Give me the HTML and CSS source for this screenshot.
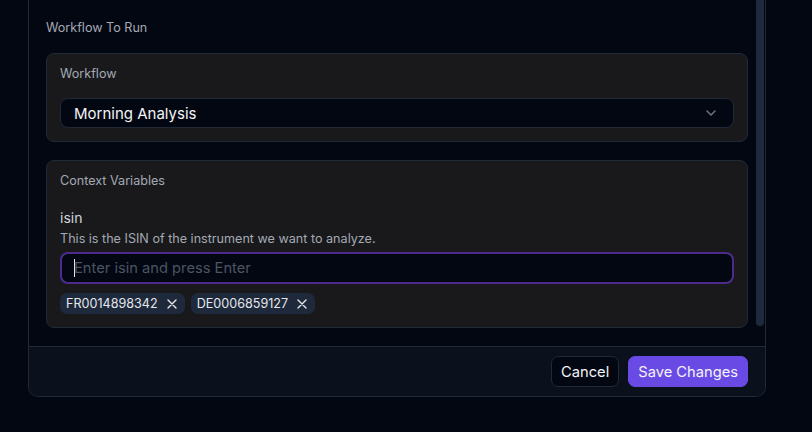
FILE: index.html
```html
<!DOCTYPE html>
<html>
<head>
    <meta charset="UTF-8">
    <meta name="viewport" content="width=device-width, initial-scale=1.0">
    <title>Edit Schedule</title>
    <link rel="stylesheet" href="styles.css">
</head>
<body>
  <div class="modal">
      <div class="modal_body">
          <div class="content">
              <div class="section_title">Workflow To Run</div>

              <div class="card">
                  <div class="card_label">Workflow</div>
                  <div class="select">
                      <span>Morning Analysis</span>
                      <svg class="chevron" width="10" height="6" viewBox="0 0 10 6" fill="none">
                          <path d="M1 1 5 5 9 1" stroke="#6b7280" stroke-width="1.5" stroke-linecap="round" stroke-linejoin="round"/>
                      </svg>
                  </div>
              </div>

              <div class="card card_vars">
                  <div class="card_label">Context Variables</div>
                  <div class="var_name">isin</div>
                  <div class="var_desc">This is the ISIN of the instrument we want to analyze.</div>
                  <div class="tag_input">
                      <span class="caret"></span><span class="placeholder">Enter isin and press Enter</span>
                  </div>
                  <div class="tags">
                      <span class="tag">FR0014898342
                          <svg width="10" height="10" viewBox="0 0 10 10" fill="none">
                              <path d="M1 1 9 9M9 1 1 9" stroke="#e5e7eb" stroke-width="1.4" stroke-linecap="round"/>
                          </svg>
                      </span>
                      <span class="tag">DE0006859127
                          <svg width="10" height="10" viewBox="0 0 10 10" fill="none">
                              <path d="M1 1 9 9M9 1 1 9" stroke="#e5e7eb" stroke-width="1.4" stroke-linecap="round"/>
                          </svg>
                      </span>
                  </div>
              </div>
          </div>
          <div class="scrollbar"><div class="thumb"></div></div>
      </div>

      <div class="modal_footer">
          <button class="btn btn_cancel" type="button">Cancel</button>
          <button class="btn btn_save" type="button">Save Changes</button>
      </div>
  </div>
</body>
</html>
```

FILE: styles.css
```css
body {
  margin: 0;
  padding-left: 28px;
  background-color: #030712;
  font-family: 'Inter', 'Noto Sans', sans-serif;
  color: #f3f4f6;
}

.modal {
  width: 738px;
  box-sizing: border-box;
  border: 1px solid #1f2937;
  border-top: none;
  border-radius: 0 0 10px 10px;
  background-color: #030712;
  overflow: hidden;
}

.modal_body {
  display: flex;
  height: 346px;
}
.content {
  flex: 1;
  padding: 18px 8px 18px 17px;
}
.scrollbar {
  width: 8px;
  margin-right: 1px;
}
.thumb {
  height: 326px;
  background-color: #1e293b;
  border-radius: 0 0 4px 4px;
}

.section_title {
  font-size: 12.6px;
  line-height: 20px;
  color: #a3a9b4;
  margin-bottom: 15px;
}

.card {
  background-color: #19191b;
  border: 1px solid #1f2937;
  border-radius: 8px;
  padding: 10px 13px 13px 13px;
}
.card_vars {
  margin-top: 18px;
}
.card_label {
  font-size: 12.6px;
  line-height: 20px;
  color: #a3a9b4;
}

.select {
  display: flex;
  align-items: center;
  justify-content: space-between;
  height: 30px;
  box-sizing: border-box;
  margin-top: 14px;
  padding: 0 17px 0 13px;
  background-color: #030712;
  border: 1px solid #1f2937;
  border-radius: 8px;
  font-size: 15px;
  color: #f3f4f6;
}

.var_name {
  margin-top: 17px;
  font-size: 14px;
  line-height: 20px;
  color: #d1d5db;
}
.var_desc {
  margin-top: 1px;
  font-size: 12.6px;
  line-height: 20px;
  color: #a3a9b4;
}

.tag_input {
  display: flex;
  align-items: center;
  height: 32px;
  box-sizing: border-box;
  margin-top: 3px;
  padding: 0 12px;
  background-color: #030712;
  border: 2px solid #4c2b8c;
  border-radius: 8px;
  font-size: 14.7px;
}
.caret {
  display: inline-block;
  width: 1px;
  height: 18px;
  margin-right: -1px;
  background-color: #e5e7eb;
}
.placeholder {
  color: #4b5563;
}

.tags {
  display: flex;
  gap: 6px;
  margin-top: 9px;
}
.tag {
  display: inline-flex;
  align-items: center;
  gap: 9px;
  height: 21px;
  padding: 0 8px 0 6px;
  background-color: #1e293b;
  border-radius: 7px;
  font-size: 12.6px;
  color: #e5e7eb;
}

.modal_footer {
  display: flex;
  justify-content: flex-end;
  gap: 9px;
  padding: 9px 17px 9px 17px;
  background-color: #0b111c;
  border-top: 1px solid #1f2937;
}
.btn {
  font-family: 'Inter', 'Noto Sans', sans-serif;
  height: 31px;
  padding: 0 9px;
  border-radius: 7px;
  font-size: 14.7px;
  color: #f3f4f6;
  cursor: pointer;
}
.btn_cancel {
  background-color: #030712;
  border: 1px solid #1f2937;
}
.btn_save {
  background-color: #6a4ae4;
  border: 1px solid #6a4ae4;
}
```
